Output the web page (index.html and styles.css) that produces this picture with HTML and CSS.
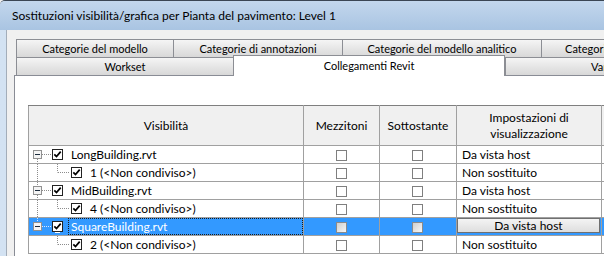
FILE: index.html
```html
<!DOCTYPE html>
<html lang="it">
<head>
	<meta charset="UTF-8">
	<title>Sostituzioni visibilità/grafica</title>
	<link rel="stylesheet" href="styles.css">
</head>
<body>
	<div id="window">
		<div id="title-bar">Sostituzioni visibilità/grafica per Pianta del pavimento: Level 1</div>
		<div id="client">
			<div id="tab-box">
				<div class="tab-row">
					<div class="tab t-model">Categorie del modello</div>
					<div class="tab t-annot">Categorie di annotazioni</div>
					<div class="tab t-anal">Categorie del modello analitico</div>
					<div class="tab t-imp">Categorie importate</div>
				</div>
				<div class="tab-row">
					<div class="tab t-work">Workset</div>
					<div class="tab t-links selected">Collegamenti Revit</div>
					<div class="tab t-var">Varianti di progetto</div>
				</div>
			</div>
			<div id="panel">
				<table id="grid">
					<colgroup>
						<col class="c-vis">
						<col class="c-half">
						<col class="c-under">
						<col class="c-disp">
						<col class="c-more">
					</colgroup>
					<tr class="head">
						<th>Visibilità</th>
						<th>Mezzitoni</th>
						<th>Sottostante</th>
						<th>Impostazioni di<br>visualizzazione</th>
						<th></th>
					</tr>
					<tr>
						<td class="tree">
							<div class="node">
								<svg class="lines" width="23" height="17"><path d="M8.5 13V17M13 8.5H22" stroke="#8c8c8c" stroke-dasharray="1 1"/><rect x="4.5" y="4.5" width="8" height="8" fill="#f4f4f4" stroke="#919191"/><path d="M6 8.5h5" stroke="#1b2b3c"/></svg>
								<svg class="cb" width="11" height="11"><rect x="0.5" y="0.5" width="10" height="10" fill="#fff" stroke="#222"/><path d="M2.3 5.3 4.5 7.6 8.7 2.6" fill="none" stroke="#000" stroke-width="1.7"/></svg>
								<span class="label">LongBuilding.rvt</span>
							</div>
						</td>
						<td class="chk"><span class="box"></span></td>
						<td class="chk"><span class="box"></span></td>
						<td class="txt">Da vista host</td>
						<td></td>
					</tr>
					<tr>
						<td class="tree">
							<div class="node">
								<svg class="lines" width="42" height="17"><path d="M8.5 0V17M28.5 0V8.5M29 8.5H41" stroke="#8c8c8c" stroke-dasharray="1 1"/></svg>
								<svg class="cb" width="11" height="11"><rect x="0.5" y="0.5" width="10" height="10" fill="#fff" stroke="#222"/><path d="M2.3 5.3 4.5 7.6 8.7 2.6" fill="none" stroke="#000" stroke-width="1.7"/></svg>
								<span class="label">1 (&lt;Non condiviso&gt;)</span>
							</div>
						</td>
						<td class="chk"><span class="box"></span></td>
						<td class="chk"><span class="box"></span></td>
						<td class="txt">Non sostituito</td>
						<td></td>
					</tr>
					<tr>
						<td class="tree">
							<div class="node">
								<svg class="lines" width="23" height="17"><path d="M8.5 0V4M8.5 13V17M13 8.5H22" stroke="#8c8c8c" stroke-dasharray="1 1"/><rect x="4.5" y="4.5" width="8" height="8" fill="#f4f4f4" stroke="#919191"/><path d="M6 8.5h5" stroke="#1b2b3c"/></svg>
								<svg class="cb" width="11" height="11"><rect x="0.5" y="0.5" width="10" height="10" fill="#fff" stroke="#222"/><path d="M2.3 5.3 4.5 7.6 8.7 2.6" fill="none" stroke="#000" stroke-width="1.7"/></svg>
								<span class="label">MidBuilding.rvt</span>
							</div>
						</td>
						<td class="chk"><span class="box"></span></td>
						<td class="chk"><span class="box"></span></td>
						<td class="txt">Da vista host</td>
						<td></td>
					</tr>
					<tr>
						<td class="tree">
							<div class="node">
								<svg class="lines" width="42" height="17"><path d="M8.5 0V17M28.5 0V8.5M29 8.5H41" stroke="#8c8c8c" stroke-dasharray="1 1"/></svg>
								<svg class="cb" width="11" height="11"><rect x="0.5" y="0.5" width="10" height="10" fill="#fff" stroke="#222"/><path d="M2.3 5.3 4.5 7.6 8.7 2.6" fill="none" stroke="#000" stroke-width="1.7"/></svg>
								<span class="label">4 (&lt;Non condiviso&gt;)</span>
							</div>
						</td>
						<td class="chk"><span class="box"></span></td>
						<td class="chk"><span class="box"></span></td>
						<td class="txt">Non sostituito</td>
						<td></td>
					</tr>
					<tr class="selected">
						<td class="tree">
							<div class="node">
								<svg class="lines" width="23" height="17"><path d="M8.5 0V4M13 8.5H22" stroke="#d8e8ff" stroke-dasharray="1 1"/><rect x="4.5" y="4.5" width="8" height="8" fill="#f4f4f4" stroke="#919191"/><path d="M6 8.5h5" stroke="#1b2b3c"/></svg>
								<svg class="cb" width="11" height="11"><rect x="0.5" y="0.5" width="10" height="10" fill="#fff" stroke="#222"/><path d="M2.3 5.3 4.5 7.6 8.7 2.6" fill="none" stroke="#000" stroke-width="1.7"/></svg>
								<span class="label">SquareBuilding.rvt</span>
							</div>
						</td>
						<td class="chk"><span class="box off"></span></td>
						<td class="chk"><span class="box off"></span></td>
						<td class="txt"><div class="cell-btn">Da vista host</div></td>
						<td></td>
					</tr>
					<tr>
						<td class="tree">
							<div class="node">
								<svg class="lines" width="42" height="17"><path d="M28.5 0V8.5M29 8.5H41" stroke="#8c8c8c" stroke-dasharray="1 1"/></svg>
								<svg class="cb" width="11" height="11"><rect x="0.5" y="0.5" width="10" height="10" fill="#fff" stroke="#222"/><path d="M2.3 5.3 4.5 7.6 8.7 2.6" fill="none" stroke="#000" stroke-width="1.7"/></svg>
								<span class="label">2 (&lt;Non condiviso&gt;)</span>
							</div>
						</td>
						<td class="chk"><span class="box"></span></td>
						<td class="chk"><span class="box"></span></td>
						<td class="txt">Non sostituito</td>
						<td></td>
					</tr>
				</table>
			</div>
		</div>
	</div>
</body>
</html>
```

FILE: styles.css
```css
*{
	margin: 0;
	padding: 0;
	box-sizing: border-box;
}
body{
	width: 604px;
	height: 256px;
	overflow: hidden;
	background: #f0f0f0;
	font-family: Lato, "Noto Sans", sans-serif;
	font-size: 12px;
	color: #000;
}
#window{
	height: 256px;
	display: flex;
	flex-direction: column;
	background: linear-gradient(90deg, #d3e2f2, #bcd2ea);
	border-top: 1px solid #3b4654;
	border-top-left-radius: 5px;
	overflow: hidden;
}
#title-bar{
	height: 29px;
	line-height: 29px;
	padding-left: 12px;
	font-size: 12px;
	white-space: nowrap;
	background: linear-gradient(#c3d7ed, #a9c4e2);
}
#client{
	flex: 1;
	min-height: 0;
	margin-left: 6px;
	border-left: 1px solid #a3adb9;
	background: #f0f0f0;
	padding: 9px 0 0 7px;
	display: flex;
	flex-direction: column;
}

/* tabs */
#tab-box{
	padding-left: 2px;
	font-size: 11px;
}
.tab-row{
	display: flex;
	height: 18px;
	white-space: nowrap;
}
.tab{
	flex: none;
	height: 18px;
	line-height: 17px;
	text-align: center;
	overflow: hidden;
	border: 1px solid #8c8e94;
	border-bottom: none;
	background: linear-gradient(#f5f5f5, #e6e6e6 50%, #d8d8d8);
	margin-left: -1px;
}
.tab:first-child{
	margin-left: 0;
}
.t-model{ width: 158px; }
.t-annot{ width: 170px; }
.t-anal{ width: 200px; }
.t-imp{ width: 145px; }
.t-work{ width: 218px; }
.t-links{ width: 272px; }
.t-var{ width: 265px; margin-left: 0; }
.tab.selected{
	position: relative;
	z-index: 1;
	height: 21px;
	margin-top: -2px;
	margin-bottom: -1px;
	line-height: 19px;
	background: #fff;
}

/* panel */
#panel{
	flex: 1;
	background: #fff;
	border: 1px solid #898c95;
	border-right: none;
	border-bottom: none;
	padding: 29px 0 0 13px;
	overflow: hidden;
}
#grid{
	border-collapse: collapse;
	table-layout: fixed;
	width: 693px;
	border-top: 1px solid #7f7f7f;
	border-left: 1px solid #7f7f7f;
}
.c-vis{ width: 275px; }
.c-half{ width: 76px; }
.c-under{ width: 77px; }
.c-disp{ width: 145px; }
.c-more{ width: 120px; }
#grid th{
	height: 40px;
	font-weight: normal;
	line-height: 16px;
	background: #f0f0f0;
	border: 1px solid #a0a0a0;
	border-top-color: #7f7f7f;
}
#grid td{
	height: 18px;
	padding: 0;
	border: 1px solid #a0a0a0;
	white-space: nowrap;
	overflow: hidden;
}
.node{
	display: flex;
	align-items: center;
	height: 17px;
}
.lines{
	flex: none;
	display: block;
}
.cb{
	flex: none;
	display: block;
}
.label{
	margin-left: 5px;
	padding: 0 2px;
	border: 1px solid transparent;
	line-height: 15px;
}
#grid td.chk{
	text-align: center;
}
.box{
	display: inline-block;
	vertical-align: middle;
	width: 11px;
	height: 11px;
	border: 1px solid #7f7f7f;
	background: #fff;
	margin-left: -1px;
}
.box.off{
	border-color: #8a8a8a;
	background: linear-gradient(135deg, #cfcfcf, #f6f6f6);
}
#grid td.txt{
	padding-left: 5px;
}
tr.selected td{
	background: #3399ff;
}
tr.selected .label{
	flex: 1;
	color: #fff;
	border: 1px dotted #1a1a1a;
}
tr.selected .cb{
	box-shadow: 0 4px 0 -3px #fff;
}
#grid tr.selected td.txt{
	padding: 0;
	vertical-align: top;
}
.cell-btn{
	height: 15px;
	line-height: 13px;
	text-align: center;
	border: 1px solid #707070;
	background: linear-gradient(#f4f4f4, #dedede);
	margin-right: 1px;
}
```
